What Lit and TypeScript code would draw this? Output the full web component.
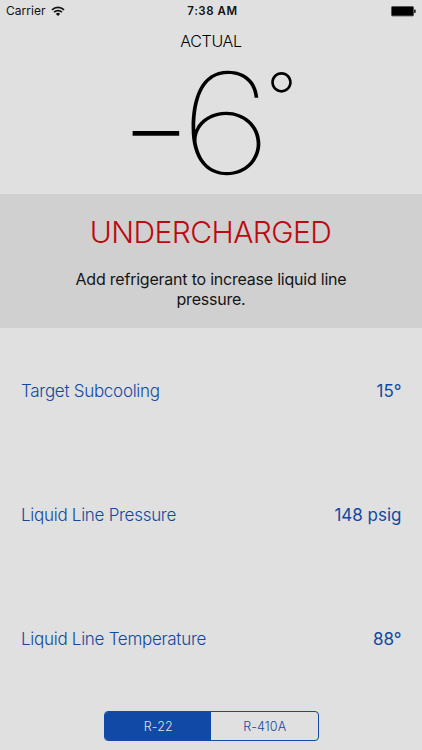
import { LitElement, html, css } from "lit";
import { customElement, state } from "lit/decorators.js";

interface Reading {
  label: string;
  value: string;
}

const READINGS: Reading[] = [
  { label: "Target Subcooling", value: "15°" },
  { label: "Liquid Line Pressure", value: "148 psig" },
  { label: "Liquid Line Temperature", value: "88°" },
];

const REFRIGERANTS = ["R-22", "R-410A"];

@customElement("status-bar")
class StatusBar extends LitElement {
  static styles = css`
    :host {
      display: grid;
      grid-template-columns: 1fr auto 1fr;
      align-items: center;
      height: 22px;
      padding: 0 6px;
      box-sizing: border-box;
      font-size: 12px;
      line-height: 22px;
      color: #111;
    }
    .carrier {
      display: flex;
      align-items: center;
      gap: 5px;
      letter-spacing: 0.05px;
    }
    .time {
      font-weight: 600;
      font-size: 11.5px;
      letter-spacing: 0.55px;
      padding-left: 3px;
    }
    .battery {
      justify-self: end;
    }
    svg {
      display: block;
    }
  `;

  render() {
    return html`
      <span class="carrier">
        Carrier
        <svg width="14" height="11" viewBox="0 0 14 11">
          <g fill="none" stroke="#111" stroke-width="1.7">
            <path d="M1 3.9A8.6 8.6 0 0 1 13 3.9" />
            <path d="M3.1 6.2A5.6 5.6 0 0 1 10.9 6.2" />
          </g>
          <path d="M4.9 7.9A3 3 0 0 1 9.1 7.9L7 10Z" fill="#111" />
        </svg>
      </span>
      <span class="time">7:38 AM</span>
      <svg class="battery" width="25" height="11" viewBox="0 0 25 11">
        <rect x="0.5" y="0.5" width="22" height="9.4" rx="1" fill="#000" stroke="#555" />
        <path d="M23 3.5h1.2a.6.6 0 0 1 .6.6v2.2a.6.6 0 0 1-.6.6H23z" fill="#333" />
      </svg>
    `;
  }
}

@customElement("app-root")
export class AppRoot extends LitElement {
  @state() private selected = 0;

  static styles = css`
    :host {
      display: flex;
      flex-direction: column;
      height: 750px;
      background: #e0e0e0;
      color: #000;
      font-family: Inter, "Liberation Sans", sans-serif;
      overflow: hidden;
    }
    .actual {
      height: 172px;
      display: flex;
      flex-direction: column;
      align-items: center;
    }
    .caption {
      font-size: 16px;
      font-weight: 300;
      line-height: 38px;
      letter-spacing: -0.3px;
    }
    .degrees {
      display: flex;
      align-items: flex-start;
      height: 126px;
      padding-left: 3px;
    }
    .degrees span {
      display: flex;
      justify-content: center;
    }
    .minus {
      width: 46px;
      margin: 54px 12px 0 0;
      font-size: 109px;
      font-weight: 150;
      line-height: 20px;
    }
    .digit {
      width: 70px;
      font-size: 140px;
      font-weight: 135;
      line-height: 126px;
      transform: scaleX(1.17);
    }
    .ring {
      width: 21px;
      margin: 17px 0 0 10px;
      font-size: 67px;
      font-weight: 220;
      line-height: 40px;
    }
    .verdict {
      height: 134px;
      box-sizing: border-box;
      padding-top: 18px;
      background: #d0d0d0;
      text-align: center;
    }
    .state {
      font-size: 30px;
      font-weight: 360;
      line-height: 40px;
      letter-spacing: -0.55px;
      padding-right: 1px;
      color: #bd0a10;
    }
    .advice {
      width: 300px;
      margin: 18px auto 0;
      font-size: 16px;
      line-height: 19.5px;
      letter-spacing: -0.22px;
      color: #151515;
    }
    .readings {
      height: 372px;
      margin-top: 1px;
      display: grid;
      grid-template-rows: repeat(3, 1fr);
      padding: 0 20.5px 0 21px;
      color: #1249a0;
      font-size: 17px;
    }
    .reading {
      display: flex;
      align-items: center;
      justify-content: space-between;
    }
    .label {
      font-weight: 300;
      letter-spacing: -0.28px;
    }
    .segments {
      display: flex;
      align-self: center;
      width: 215px;
      height: 30px;
      margin-top: 10px;
      box-sizing: border-box;
      border: 1px solid #1249a6;
      border-radius: 4px;
      overflow: hidden;
    }
    .segment {
      flex: 1;
      padding: 1px 0 0 1px;
      border: 0;
      background: transparent;
      color: #1249a0;
      font: 300 12.5px/27px Inter, "Liberation Sans", sans-serif;
      letter-spacing: 0.1px;
    }
    .segment.on {
      background: #1049a6;
      color: #e0e0e0;
    }
  `;

  render() {
    return html`
      <status-bar></status-bar>
      <section class="actual">
        <div class="caption">ACTUAL</div>
        <div class="degrees">
          <span class="minus">−</span><span class="digit">6</span><span class="ring">°</span>
        </div>
      </section>
      <section class="verdict">
        <div class="state">UNDERCHARGED</div>
        <div class="advice">Add refrigerant to increase liquid line pressure.</div>
      </section>
      <section class="readings">
        ${READINGS.map(
          (r) => html`<div class="reading">
            <span class="label">${r.label}</span>
            <span>${r.value}</span>
          </div>`
        )}
      </section>
      <div class="segments">
        ${REFRIGERANTS.map(
          (name, i) => html`<button
            class="segment ${i === this.selected ? "on" : ""}"
            @click=${() => (this.selected = i)}
          >${name}</button>`
        )}
      </div>
    `;
  }
}
